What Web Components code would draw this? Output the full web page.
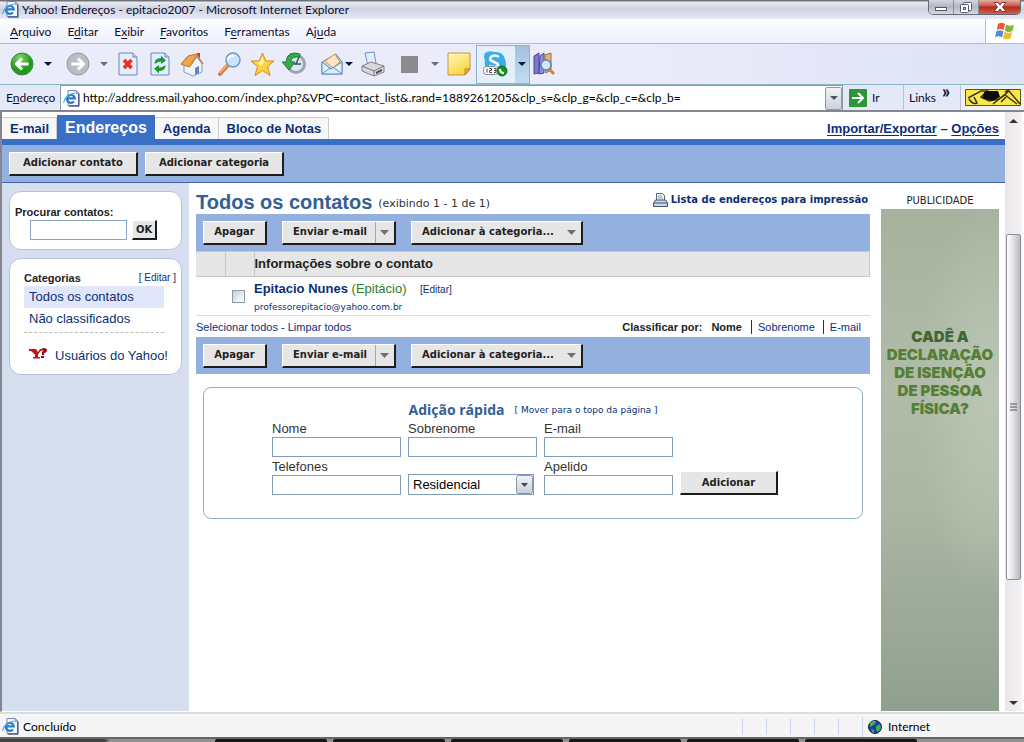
<!DOCTYPE html>
<html lang="pt-BR">
<head>
<meta charset="utf-8">
<title>Yahoo! Endereços</title>
<style>
html, body { margin: 0; height: 100%; overflow: hidden; }
body {
  font: 13px/16px "Liberation Sans", sans-serif; color: #222; background: #fff;
  --chrome: Lato, "Open Sans", sans-serif;
  --wide: "DejaVu Sans", sans-serif;
  --navy: #0a2f78; --bar: #94b0df; --blue: #3a6fc8;
}
</style>
</head>
<body>
<browser-window></browser-window>
<script>
function define(name, css, html, setup) {
  const template = document.createElement('template');
  template.innerHTML = `<style>*{box-sizing:border-box}${css}</style>${html}`;
  customElements.define(name, class extends HTMLElement {
    constructor() {
      super();
      this.attachShadow({ mode: 'open' }).append(template.content.cloneNode(true));
      if (setup) setup(this, this.shadowRoot);
    }
  });
}

const iePage = `<svg width="17" height="17" viewBox="0 0 17 17"><path d="M5 .5h8l3 3v12H5z" fill="#f3f8ff" stroke="#7888ac"/><path d="M13 .5v3h3z" fill="#a9bce0" stroke="#6a7cab" stroke-width=".6"/><path d="M15.700 4v12H6" fill="none" stroke="#555c8c" stroke-width="1.400"/><path d="M11 11.300a4 4 0 1 1 .8-2.900H4.200" fill="none" stroke="#2b7cc9" stroke-width="2.200"/><path d="M1 13C0 10 5 4 12 3" fill="none" stroke="#49a6e6" stroke-width="1.200"/></svg>`;

define('title-bar', `
:host { display: flex; height: 19px; padding-left: 2px; gap: 3px; align-items: center;
  background: linear-gradient(#70707a 0 1px, #e9ebf2 2px, #ced3e0 45%, #e6e8f6); color: #0b0b33; font: 12px/16px var(--chrome); }
span { flex: 1; white-space: nowrap; }
.ctl { display: flex; align-self: flex-start; margin-right: 3px; border: 1px solid #666b7a; border-top: 0; border-radius: 0 0 5px 5px; overflow: hidden; }
button { width: 25px; height: 14px; padding: 0; border: 0; border-right: 1px solid #8b8f9e; background: linear-gradient(#d6d8df, #b4b8c4 45%, #d5d8e2); display: grid; place-items: center; }
.x { width: 41px; border: 0; background: linear-gradient(#e6aca6, #cf5b50 40%, #b02c20 50%, #d5604c); }`,
`${iePage}<span>Yahoo! Endereços - epitacio2007 - Microsoft Internet Explorer</span>
<div class="ctl">
<button aria-label="Minimizar"><svg width="14" height="12"><rect x="1.500" y="6.500" width="11" height="3" fill="#fff" stroke="#555b6c"/></svg></button>
<button aria-label="Restaurar"><svg width="14" height="13"><rect x="4.500" y="1.500" width="8" height="8" rx="1" fill="#fff" stroke="#555b6c"/><rect x="1.500" y="3.500" width="8" height="8" rx="1" fill="#fff" stroke="#555b6c"/><rect x="4.500" y="6.500" width="2" height="2" fill="#bbb" stroke="#555b6c"/></svg></button>
<button class="x" aria-label="Fechar"><svg width="14" height="12"><path d="M1 1.500h4L7 4l2-2.500h4L9.500 6l3.500 4.500H9L7 8l-2 2.500H1L4.500 6z" fill="#fff" stroke="#7b3531"/></svg></button>
</div>`);

define('menu-bar', `
:host { display: flex; height: 25px; background: linear-gradient(#fdfdff, #eef1fd); border-bottom: 1px solid #a9bed2; font: 12px/26px var(--chrome); color: #0b0b33; }
nav { flex: 1; display: flex; gap: 16px; padding-left: 10px; }
u { text-underline-offset: 2px; }
a { color: inherit; text-decoration: none; }
.flag { width: 39px; background: #fff; border-left: 1px solid #b5c2d4; display: grid; place-items: center; }`,
`<nav><a href="#"><u>A</u>rquivo</a><a href="#">E<u>d</u>itar</a><a href="#">E<u>x</u>ibir</a><a href="#"><u>F</u>avoritos</a><a href="#">F<u>e</u>rramentas</a><a href="#">Aj<u>u</u>da</a></nav>
<div class="flag"><svg width="20" height="20" viewBox="0 0 20 20"><path d="M3 3q4-2.500 7 0L8.700 9q-3.500-2-7 0z" fill="#ee5a2c"/><path d="M11 3.500q4 2.500 8 .2L17.500 10q-4 2-7.700-.3z" fill="#7cb83c"/><path d="M1.400 10.300q3.500-2 7 0L7 16.500q-3.500-2.300-7 0z" fill="#4a90d9"/><path d="M9.500 10.800q4 2.300 7.700.2L15.700 17.300q-4 2.200-7.700-.3z" fill="#f6bd28"/></svg></div>`);

define('tool-bar', `
:host { display: flex; height: 41px; align-items: center; padding-left: 10px; gap: 8px; background: linear-gradient(90deg, #e9ecf9, #ecebfa 60%, #dde3f6); border-bottom: 1px solid #8fb6c4; }
button { width: 24px; height: 28px; padding: 0; border: 0; background: none; display: grid; place-items: center; }
button svg { display: block; }
.d { width: 8px; }
.s { margin-left: 6px; }
.g { margin-left: 4px; }
.j { margin-left: -7px; }
.k { margin-left: 2px; }
.sky { display: flex; height: 39px; margin: 0 -6px 0 -3px; border: 1px solid #8db3d4; background: #e3f0fc; }
.sky button { width: 38px; height: 100%; }
.sky .d { width: 14px; background: linear-gradient(#a5c0da, #c1dcf4); }`,
`<button aria-label="Voltar"><svg width="24" height="24" viewBox="0 0 24 24"><defs><radialGradient id="g" cx=".4" cy=".25"><stop stop-color="#8ad56f"/><stop offset="1" stop-color="#239a1c"/></radialGradient></defs><circle cx="12" cy="12" r="11" fill="url(#g)" stroke="#3a8c36"/><path d="M18.500 12H7M12 6.500 6.500 12l5.500 5.500" fill="none" stroke="#fff" stroke-width="3"/></svg></button>
<button class="d k" data-c="#0b1440"></button>
<button class="s" aria-label="Avançar"><svg width="24" height="24" viewBox="0 0 24 24"><circle cx="12" cy="12" r="11" fill="#bcbdc4" stroke="#95969e"/><path d="M5.500 12H17M12 6.500l5.500 5.500-5.500 5.500" fill="none" stroke="#fff" stroke-width="3"/></svg></button>
<button class="d k" data-c="#666b78"></button>
<button aria-label="Parar"><svg width="20" height="24" viewBox="0 0 20 24"><path d="M1 1h14l4 4v18H1z" fill="#e3edfe" stroke="#6d88b8"/><path d="M15 1v4h4" fill="#cad8f0" stroke="#6d88b8"/><path d="m6 8 7.500 8m0-8L6 16" stroke="#ee2e14" stroke-width="3.500"/></svg></button>
<button aria-label="Atualizar"><svg width="20" height="24" viewBox="0 0 20 24"><path d="M1 1h14l4 4v18H1z" fill="#e3edfe" stroke="#6d88b8"/><path d="M15 1v4h4" fill="#cad8f0" stroke="#6d88b8"/><path d="M4.500 12q0-6 6.500-6V3.500L16 8.500l-5 3.500V9.500q-3.500 0-6.500 2.500zM15.500 13q0 6-6.500 6v2.500l-5-5L9 13v2.500q3.500 0 6.500-2.500z" fill="#1c9932"/></svg></button>
<button aria-label="Página inicial"><svg width="24" height="26" viewBox="0 0 24 26"><path d="M17 2h3v9h-3z" fill="#c23d30"/><path d="m11 13 6-7 5 7v8l-9 4-9-4v-9z" fill="#eef2fb" stroke="#8c9ab8"/><path d="M1 13 8 5l9-2-5 10-3 3z" fill="#f3a648" stroke="#b87327"/><path d="m11 13 6-9 6 9" fill="none" stroke="#c98c58" stroke-width="1.500"/><path d="M15 24v-7l4-2v7z" fill="#5b87c8"/></svg></button>
<button class="s" aria-label="Pesquisar"><svg width="24" height="24" viewBox="0 0 24 24"><path d="m2 22 7-8" stroke="#d47b35" stroke-width="4" stroke-linecap="round"/><path d="m2 21 7-8" stroke="#f3b577" stroke-width="1.500"/><circle cx="15" cy="8" r="7" fill="#c6e5fb" stroke="#7698c5" stroke-width="1.500"/><path d="M10 8q1-5 6-4" fill="none" stroke="#fff" stroke-width="2"/></svg></button>
<button aria-label="Favoritos"><svg width="25" height="25" viewBox="0 0 25 25"><path d="m12.500 1 3.300 8h8.200l-6.500 5.500 2.500 9-7.500-5-7.500 5 2.500-9L1 9h8.200z" fill="#fcd33f" stroke="#d18920"/><path d="m12.500 4 1.500 6-3 4-4-4h3z" fill="#fff4a8"/></svg></button>
<button aria-label="Histórico"><svg width="24" height="24" viewBox="0 0 24 24"><circle cx="14" cy="12" r="8.500" fill="#dde7ef" stroke="#9aa3ae" stroke-width="3"/><path d="M17 5l-3 7h5M14 12h-2" fill="none" stroke="#35536b" stroke-width="1.500"/><path d="M18 2Q5-2 4 10H0l7 8 6-8H9q0-6 9-5z" fill="#39a94c" stroke="#1e7f35"/></svg></button>
<button class="s" aria-label="Correio"><svg width="24" height="24" viewBox="0 0 24 24"><path d="m2 10 14-8 6 8v12L2 22z" fill="#b9dcf7" stroke="#6688b7"/><path d="m5 9 10-7 5 8-7 6z" fill="#fde6c4" stroke="#e08d3c"/><path d="m2 10 9 7 11-7v12H2z" fill="#dceffd" stroke="#6688b7"/><path d="m2 22 8-6m12 6-8-6" stroke="#6688b7"/></svg></button>
<button class="d j" data-c="#0b1440"></button>
<button aria-label="Imprimir"><svg width="24" height="26" viewBox="0 0 24 26"><path d="m4 2 9-1 2 11-8 3z" fill="#dfeefe" stroke="#7292c0"/><path d="m1 15 9-4 13 4v6l-10 4-12-5z" fill="#d8d8dc" stroke="#7e7e88"/><path d="m1 15 12 5 10-5M13 20v5" fill="none" stroke="#777"/><path d="m15 21 6-3v2l-6 3z" fill="#444"/></svg></button>
<button class="g" aria-label="Editar"><svg width="17" height="17"><path d="M0 0h17v17H0z" fill="#8c8c8c"/></svg></button>
<button class="d k" data-c="#666b78"></button>
<button aria-label="Notas"><svg width="24" height="24" viewBox="0 0 24 24"><defs><linearGradient id="n" x2=".6" y2="1"><stop stop-color="#fffbc4"/><stop offset="1" stop-color="#fbd23e"/></linearGradient></defs><path d="M1 1h22v16l-5 6H1z" fill="url(#n)" stroke="#c79a3a"/><path d="M23 17h-5v6z" fill="#f1b630" stroke="#b58222"/></svg></button>
<div class="sky"><button aria-label="Skype"><svg width="26" height="26" viewBox="0 0 26 26"><path d="M2 2q5-3 9-1 9-1 11 7 3 9-3 12L3 17q-2-3-1-8-2-3 0-7z" fill="#3aaee8"/><path d="M16 6q-5-3-8 0t3 5 3 4-8 0" fill="none" stroke="#fff" stroke-width="2.500"/><rect x=".5" y="15.500" width="15" height="8" rx="3" fill="#fff" stroke="#888"/><path d="M4 17.500v4M6.500 17.500h2v2h-2v2h2.500M11 17.500h2v4h-2m0-2h2" fill="none" stroke="#444"/><circle cx="19" cy="20" r="5" fill="#1f8e28" stroke="#166d1d"/><path d="M17 18q0 4 4 4" fill="none" stroke="#fff" stroke-width="2"/></svg></button><button class="d" data-c="#0b1440"></button></div>
<button aria-label="Pesquisa"><svg width="24" height="24" viewBox="0 0 24 24"><path d="m2 4 5-3v20l-5 1z" fill="#7b77d0" stroke="#4c4896"/><path d="m8 4 4-3v20l-5 1z" fill="#8f8be0" stroke="#4c4896"/><path d="m13 3 6-2v17l-5 3z" fill="#e3b877" stroke="#94723d"/><path d="m17 17 5 5" stroke="#c98a3a" stroke-width="3"/><circle cx="14" cy="13" r="5" fill="#cfe9fb" stroke="#6683ab" stroke-width="1.500"/></svg></button>`,
(el, root) => root.querySelectorAll('[data-c]').forEach(b => {
  b.setAttribute('aria-label', 'Mais opções');
  b.innerHTML = `<svg width="8" height="4"><path d="M0 0h8L4 4z" fill="${b.dataset.c}"/></svg>`;
}));

define('address-bar', `
:host { display: flex; height: 27px; align-items: stretch; background: #e4e9f8; border-bottom: 2px solid #85858f; font: 12px/25px var(--chrome); color: #0b0b33; }
label { width: 60px; padding-left: 6px; }
.box { flex: 1; display: flex; align-items: center; background: #fff; border: 1px solid #8a9aa6; border-width: 1px 1px 0; padding-left: 2px; gap: 3px; }
input { flex: 1; min-width: 0; height: 22px; border: 0; outline: 0; padding: 0; font: 12px/22px var(--chrome); color: #000; background: none; }
button { border: 0; padding: 0; background: none; font: inherit; color: inherit; }
.dd { width: 17px; height: 23px; border: 1px solid #9199a8; border-radius: 2px; background: linear-gradient(#f2f3f7, #ccd1dd); display: grid; place-items: center; }
.go { display: flex; gap: 5px; align-items: center; width: 60px; padding-left: 6px; }
.links { width: 57px; border-left: 1px solid #b7c0d4; display: flex; gap: 6px; padding-left: 5px; }
.links sup { font: 700 18px/12px var(--chrome); }
.logo { width: 64px; display: grid; place-items: center; border-left: 1px solid #b7c0d4; background: #f0f1f8; }`,
`<label for="url">E<u>n</u>dereço</label>
<div class="box">${iePage}<input id="url" value="http://address.mail.yahoo.com/index.php?&amp;VPC=contact_list&amp;.rand=1889261205&amp;clp_s=&amp;clp_g=&amp;clp_c=&amp;clp_b="><button class="dd" aria-label="Histórico"><svg width="8" height="4"><path d="M0 0h8L4 4z" fill="#4a5266"/></svg></button></div>
<button class="go"><svg width="18" height="18"><rect width="18" height="18" rx="1" fill="#2e9636"/><path d="M3 9h11M9 4l5 5-5 5" fill="none" stroke="#fff" stroke-width="2"/></svg>Ir</button>
<div class="links">Links<sup>»</sup></div>
<div class="logo"><svg width="56" height="17"><path d="M.5.500h55v16H.5z" fill="#f9e84b" stroke="#5c5210"/><path d="M3 9 16 2h6l-6 6 8 4 10-2 6-4 12 9" fill="none" stroke="#443b0c" stroke-width="1.500"/><path d="M20 2h13l2 6-8 4-10-3z" fill="#0d0d0d"/><path d="M4 10q4 6 8 4L9 8M28 15 44 2l11 13M36 13l5-5M40 3l4-2" fill="none" stroke="#3c340a" stroke-width="1.500"/></svg></div>`);

define('raised-button', `
:host { display: inline-flex; }
button { display: flex; align-items: center; flex: 1; height: 24px; padding: 0 10px; justify-content: center; border: 1px solid #fff; border-width: 1px 2px 2px 1px; border-color: #fff #1c1c1c #1c1c1c #fff; background: #e6e6e6; color: #222; font: bold 10px/16px var(--wide); white-space: nowrap; }
svg { display: none; margin-left: 12px; }
:host([menu]) svg { display: block; }
:host([menu]) button { padding: 0 5px 0 10px; justify-content: space-between; }
:host([split]) svg { box-sizing: content-box; padding: 8px 0 8px 4px; border-left: 1px solid #aaa; margin-left: 8px; }
:host([small]) button { height: 20px; padding: 0 3px; }`,
`<button><slot></slot><svg width="9" height="5"><path d="M0 0h9L4.500 5z" fill="#707070"/></svg></button>`);

define('section-tabs', `
:host { display: flex; align-items: flex-end; height: 33px; border-bottom: 6px solid var(--blue); background: #fff; }
nav { display: flex; align-items: flex-end; flex: 1; }
nav a { height: 22px; padding: 0 7px 0 8px; border: 1px solid #ccc; border-width: 1px 1px 0 0; background: #f7f7f7; font: bold 13px/21px "Liberation Sans", sans-serif; color: var(--navy); text-decoration: none; white-space: nowrap; }
nav .on { height: 24px; border: 0; background: var(--blue); color: #fff; font-size: 16px; line-height: 26px; padding: 0 8px; }
.r { padding: 0 6px 2px 0; font-weight: bold; color: var(--navy); }
.r a { color: inherit; text-underline-offset: 2px; }`,
`<nav><a href="#">E-mail</a><a href="#" class="on">Endereços</a><a href="#">Agenda</a><a href="#">Bloco de Notas</a></nav>
<div class="r"><a href="#">Importar/Exportar</a> – <a href="#">Opções</a></div>`);

define('command-strip', `
:host { display: flex; gap: 7px; height: 38px; padding: 0 7px; align-items: center; background: var(--bar); border-bottom: 1px solid #3f66ab; }
raised-button:first-child { width: 129px; }
.w { width: 139px; }
.v { width: 129px; }`,
`<raised-button class="v">Adicionar contato</raised-button><raised-button class="w">Adicionar categoria</raised-button>`);

define('side-panel', `
:host { display: flex; flex-direction: column; gap: 8px; width: 187px; padding: 8px 7px; background: #d5dff0; color: var(--navy); }
section { background: #fff; border: 1px solid #b9c3d6; border-radius: 12px; }
.find { height: 59px; padding: 12px 5px 0; }
.find label { display: block; font: bold 11px/16px "Liberation Sans", sans-serif; color: #222; }
.row { display: flex; gap: 5px; padding-left: 15px; align-items: center; }
input { width: 97px; height: 20px; border: 1px solid #88a6c4; padding: 0 2px; }
.cats { height: 117px; padding: 11px 5px 0 14px; }
h2 { display: flex; justify-content: space-between; margin: 0; font: bold 11px/16px "Liberation Sans", sans-serif; color: #222; }
h2 a { font-weight: 400; font-size: 10px; }
a { color: var(--navy); text-decoration: none; display: block; }
.cats > a { line-height: 22px; padding-left: 5px; width: 140px; white-space: nowrap; }
.on { background: #e2e6fb; }
hr { width: 140px; margin: 2px 0 11px; border: 0; border-top: 1px dashed #bbb; }
.cats .y { display: flex; gap: 8px; width: auto; align-items: center; line-height: 24px; }
.y svg { margin-bottom: 6px; }`,
`<section class="find"><label for="q">Procurar contatos:</label><div class="row"><input id="q"><raised-button small>OK</raised-button></div></section>
<section class="cats"><h2>Categorias <a href="#">[ Editar ]</a></h2><a href="#" class="on">Todos os contatos</a><a href="#">Não classificados</a><hr>
<a href="#" class="y"><svg width="18" height="11"><path d="M0 1h7l2 3 2-3h2L9 6.500V9h2v1.500H4V9h2V6.500L2 3H0z" fill="#c81414"/><path d="M12 3q0-3 3-3t3 3q-1 2-3 2v2h-2V4l2-2zM12 8h3v2h-3z" fill="#8c1010"/></svg>Usuários do Yahoo!</a></section>`);

define('action-bar', `
:host { display: flex; align-items: center; gap: 15px; height: 37px; padding-left: 7px; background: var(--bar); }
.a { width: 64px; } .b { width: 114px; } .c { width: 172px; }`,
`<raised-button class="a">Apagar</raised-button><raised-button class="b" menu split>Enviar e-mail</raised-button><raised-button class="c" menu>Adicionar à categoria...</raised-button>`);

define('contact-list', `
:host { display: block; }
header { display: flex; align-items: center; height: 31px; padding-top: 6px; }
h1 { margin: 0 6px 0 0; font: bold 20px/24px "Liberation Sans", sans-serif; color: #336094; }
.n { flex: 1; font: 11px/16px var(--wide); padding-top: 4px; color: #333; }
a { color: var(--navy); text-decoration: none; }
.p { display: flex; gap: 3px; font: bold 10px/16px var(--wide); align-items: center; padding: 0 2px 3px 0; }
table { width: 100%; border-collapse: collapse; }
th { height: 25px; padding: 0; background: #e6e6e6; border: 1px solid #c8c8c8; border-width: 1px 1px 1px 0; text-align: left; font-weight: bold; }
th:nth-child(1), th:nth-child(2) { width: 29px; }
td { height: 38px; padding: 0; border-bottom: 1px solid #ddd; }
td:nth-child(2) { vertical-align: middle; }
td:nth-child(3) { padding-top: 4px; }
input { width: 13px; height: 13px; margin: 0 0 0 7px; appearance: none; border: 1px solid #8a9aa8; background: linear-gradient(135deg, #cfcfcf, #fff); display: block; }
.nm { font-weight: bold; }
i { font-style: normal; color: #2e7d22; }
.e { font-size: 10px; margin-left: 10px; }
.m { display: block; font: 9px/16px var(--wide); margin-top: 1px; }
footer { display: flex; justify-content: space-between; height: 21px; font-size: 11px; line-height: 22px; color: #222; }
.s { display: flex; align-items: center; gap: 6px; padding-right: 9px; }
.s a { border-left: 1px solid #333; padding-left: 6px; line-height: 14px; margin-left: 3px; }
.s b + b { margin-left: 3px; }
.s a + a { margin-left: 2px; }`,
`<header><h1>Todos os contatos</h1><span class="n">(exibindo 1 - 1 de 1)</span>
<a href="#" class="p"><svg width="15" height="14"><path d="M3.500 7V.500h6l2 2V7" fill="#eef6f8" stroke="#53677c"/><path d="M5 3h4M5 5h5" stroke="#7aa"/><path d="M2.500 7h10l2 3v3.500H.5V10z" fill="#cfd6e2" stroke="#3f4f70"/><path d="M1 10h13" stroke="#3f4f70"/></svg>Lista de endereços para impressão</a></header>
<action-bar></action-bar>
<table><thead><tr><th></th><th></th><th>Informações sobre o contato</th></tr></thead>
<tbody><tr><td></td><td><input type="checkbox" aria-label="Selecionar Epitacio Nunes"></td><td><a href="#" class="nm">Epitacio Nunes</a> <i>(Epitácio)</i> <a href="#" class="e">[Editar]</a><a href="#" class="m">professorepitacio@yahoo.com.br</a></td></tr></tbody></table>
<footer><span><a href="#">Selecionar todos</a> - <a href="#">Limpar todos</a></span><div class="s"><b>Classificar por:</b><b>Nome</b><a href="#">Sobrenome</a><a href="#">E-mail</a></div></footer>
<action-bar></action-bar>`);

define('quick-add', `
:host { display: block; height: 132px; margin: 13px 7px 0; padding: 14px 68px 0; border: 1px solid #8fafc4; border-radius: 8px; color: #333; }
header { display: flex; justify-content: center; align-items: flex-start; gap: 10px; height: 19px; }
h2 { margin: 0; font: bold 14px/16px "Open Sans", sans-serif; color: #336094; }
a { font: 9px/16px var(--wide); color: var(--navy); text-decoration: none; }
form { display: grid; grid-template-columns: 129px 129px 129px 98px; column-gap: 7px; row-gap: 2px; align-items: end; }
.f { display: flex; flex-direction: column; }
label { line-height: 16px; }
input, select { width: 100%; height: 20px; border: 1px solid #7f9db9; border-radius: 0; padding: 0 4px; background: #fff; }
.sel { width: 126px; display: grid; }
.sel > * { grid-area: 1 / 1; }
select { appearance: none; height: 21px; font: 13px/16px "Liberation Sans", sans-serif; color: #000; }
.sel svg { justify-self: end; align-self: center; margin-right: 1px; pointer-events: none; }`,
`<header><h2>Adição rápida</h2><a href="#">[ Mover para o topo da página ]</a></header>
<form><div class="f"><label for="n">Nome</label><input id="n"></div><div class="f"><label for="s">Sobrenome</label><input id="s"></div><div class="f"><label for="e">E-mail</label><input id="e"></div><span></span>
<div class="f"><label for="t">Telefones</label><input id="t"></div><div class="sel"><select aria-label="Tipo de telefone"><option>Residencial</option></select><svg width="17" height="19"><defs><linearGradient id="a" x2="0" y2="1"><stop stop-color="#f4f5f8"/><stop offset="1" stop-color="#c8cdd9"/></linearGradient></defs><rect x=".5" y=".5" width="16" height="18" rx="2" fill="url(#a)" stroke="#8c93a4"/><path d="M5 8h7l-3.500 4z" fill="#3f485c"/></svg></div><div class="f"><label for="k">Apelido</label><input id="k"></div><raised-button>Adicionar</raised-button></form>`);

define('ad-banner', `
:host { display: flex; flex-direction: column; width: 118px; text-align: center; }
small { height: 26px; padding-top: 10px; font: 10px/16px var(--wide); color: #222; }
a { flex: 1; padding-top: 119px; background: radial-gradient(ellipse at 90% 38%, #bac6b4 0, transparent 45%), linear-gradient(#a6b29d, #b0bbaa 35%, #abb5a4 60%, #90a08f); color: #567f35; font: 900 15px/18px Inter, "Liberation Sans", sans-serif; text-decoration: none; white-space: nowrap; }
a span { display: block; } .top { color: #426632; }`,
`<small>PUBLICIDADE</small><a href="#"><span class="top">CADÊ A</span><span>DECLARAÇÃO</span><span>DE ISENÇÃO</span><span>DE PESSOA</span><span>FÍSICA?</span></a>`);

define('scroll-bar', `
:host { display: flex; flex-direction: column; width: 17px; margin-right: 2px; align-items: center; background: linear-gradient(90deg, #e9e5e9, #f6f3f6); }
svg { flex: none; }
.a { flex: 106; } .t { flex: 345; width: 15px; border: 1px solid #8e8e98; border-radius: 2px; background: linear-gradient(90deg, #fff, #e6e6ec 40%, #b9b9c4); display: grid; place-items: center; } .b { flex: 115; }`,
`<svg width="17" height="17"><path d="M4 11h9L8.500 7z" fill="#333"/></svg><div class="a"></div><div class="t"><svg width="8" height="9"><path d="M0 1h7M0 4h7M0 7h7" stroke="#555"/></svg></div><div class="b"></div><svg width="17" height="17"><path d="M4 7h9l-4.500 4z" fill="#333"/></svg>`);

define('status-bar', `
:host { display: flex; align-items: center; height: 25px; padding: 2px 0 0 2px; gap: 4px; background: #f5f5f6; border-top: 2px solid #dcdcde; font: 12px/20px var(--chrome); color: #000; }
.m { flex: 1; }
.c { width: 20px; height: 17px; border-left: 1px solid #ccd6ea; }
.z { display: flex; align-items: center; gap: 6px; width: 162px; padding-left: 5px; border-left: 1px solid #ccd6ea; }`,
`${iePage}<span class="m">Concluído</span><i class="c"></i><i class="c"></i><i class="c"></i><i class="c"></i><i class="c"></i><div class="z"><svg width="14" height="14" viewBox="0 0 14 14"><circle cx="7" cy="7" r="6.500" fill="#1c3ba6" stroke="#14235c"/><path d="M2 3q3-3 6-2L7 4 4 6 2 7zM8 6l4-2 1 4-3 4-2-2zM3 9l3 1v3l-2-1z" fill="#3bb54a"/></svg>Internet</div>`);

define('task-edge', `
:host { display: flex; height: 5px; gap: 6px; padding-left: 215px; border-top: 2px solid #66666a; background: linear-gradient(90deg, #444 0 105px, #929292 110px); }
i { width: 112px; background: #161616; border-radius: 2px 2px 0 0; }`,
`<i></i><i></i><i></i><i></i><i></i><i></i>`);

define('browser-window', `
:host { display: flex; flex-direction: column; height: 100vh; }
.view { flex: 1; display: flex; min-height: 0; border-left: 2px solid #85858f; border-bottom: 1px solid #fff; }
.page { flex: 1; min-width: 0; display: flex; flex-direction: column; }
title-bar, menu-bar, tool-bar, address-bar, status-bar, task-edge { flex: none; }
.body { flex: 1; display: flex; min-height: 0; }
main { flex: 1; min-width: 0; padding: 0 11px 0 7px; }
ad-banner { margin-right: 6px; }`,
`<title-bar></title-bar><menu-bar></menu-bar><tool-bar></tool-bar><address-bar></address-bar>
<div class="view"><div class="page"><section-tabs></section-tabs><command-strip></command-strip>
<div class="body"><side-panel></side-panel><main><contact-list></contact-list><quick-add></quick-add></main><ad-banner></ad-banner></div></div><scroll-bar></scroll-bar></div>
<status-bar></status-bar><task-edge></task-edge>`);
</script>
</body>
</html>
